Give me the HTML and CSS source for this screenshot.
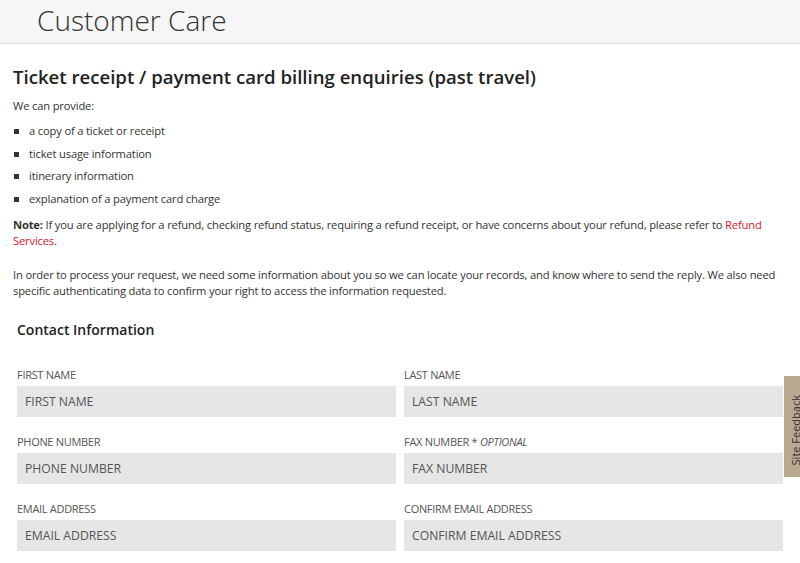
FILE: index.html
```html
<!DOCTYPE html>
<html lang="en">
<head>
    <meta charset="UTF-8">
    <title>Customer Care</title>
    <link rel="stylesheet" href="styles.css">
</head>
<body>
<div class="page-header">
    <div class="page-title">Customer Care</div>
</div>

<div class="content">
    <h1>Ticket receipt / payment card billing enquiries (past travel)</h1>
    <p>We can provide:</p>
    <ul class="provide-list">
        <li>a copy of a ticket or receipt</li>
        <li>ticket usage information</li>
        <li>itinerary information</li>
        <li>explanation of a payment card charge</li>
    </ul>
    <p class="note"><b>Note:</b> If you are applying for a refund, checking refund status, requiring a refund receipt, or have concerns about your refund, please refer to <a href="#">Refund Services</a>.</p>
    <p class="intro">In order to process your request, we need some information about you so we can locate your records, and know where to send the reply. We also need specific authenticating data to confirm your right to access the information requested.</p>

    <form class="contact-form">
        <h2>Contact Information</h2>
        <div class="form-grid">
            <div class="field">
                <label>FIRST NAME</label>
                <input type="text" placeholder="FIRST NAME">
            </div>
            <div class="field">
                <label>LAST NAME</label>
                <input type="text" placeholder="LAST NAME">
            </div>
            <div class="field">
                <label>PHONE NUMBER</label>
                <input type="text" placeholder="PHONE NUMBER">
            </div>
            <div class="field">
                <label>FAX NUMBER * <i>OPTIONAL</i></label>
                <input type="text" placeholder="FAX NUMBER">
            </div>
            <div class="field">
                <label>EMAIL ADDRESS</label>
                <input type="text" placeholder="EMAIL ADDRESS">
            </div>
            <div class="field">
                <label>CONFIRM EMAIL ADDRESS</label>
                <input type="text" placeholder="CONFIRM EMAIL ADDRESS">
            </div>
        </div>
    </form>
</div>

<div class="feedback-tab"><span>Site Feedback</span></div>
</body>
</html>
```

FILE: styles.css
```css
* {
    margin: 0;
    padding: 0;
    box-sizing: border-box;
}

body {
    font-family: "Open Sans", "Liberation Sans", sans-serif;
    font-size: 11.2px;
    color: #333;
    background-color: #fff;
    overflow: hidden;
}

.page-header {
    height: 44px;
    background-color: #f6f6f6;
    border-bottom: 1px solid #e2e2e2;
    padding-left: 37px;
}

.page-title {
    font-size: 28px;
    font-weight: 300;
    line-height: 40px;
    color: #333;
}

.content {
    padding: 20px 13px 0;
}

h1 {
    font-size: 18.6px;
    font-weight: 600;
    line-height: 26px;
    color: #222;
    margin-bottom: 8px;
}

p {
    line-height: 16px;
    letter-spacing: -0.17px;
}

.provide-list {
    list-style: none;
    margin: 6px 0 7px;
    letter-spacing: -0.17px;
}

.provide-list li {
    line-height: 16px;
    padding: 3.3px 0 3.3px 16px;
    position: relative;
}

.provide-list li:before {
    content: "";
    width: 5px;
    height: 5px;
    background-color: #333;
    position: absolute;
    left: 1px;
    top: 9px;
}

.note {
    margin-bottom: 18px;
}

.note b {
    font-weight: 700;
}

.note a {
    color: #d7182a;
    text-decoration: none;
}

.contact-form {
    padding: 0 4px;
}

h2 {
    font-size: 14px;
    font-weight: 600;
    color: #222;
    line-height: 20px;
    margin: 21px 0 27px;
}

.form-grid {
    display: grid;
    grid-template-columns: 1fr 1fr;
    column-gap: 8px;
    row-gap: 17px;
}

.field label {
    display: block;
    font-size: 11px;
    line-height: 15px;
    color: #555;
    letter-spacing: -0.3px;
    margin-bottom: 4px;
}

.field label i {
    font-style: italic;
}

.field input {
    display: block;
    width: 100%;
    height: 31px;
    border: 0;
    background-color: #e6e6e6;
    padding: 0 8px;
    font-family: "Open Sans", "Liberation Sans", sans-serif;
    font-size: 12.2px;
    color: #555;
    outline: none;
}

.field input::placeholder {
    color: #555;
    opacity: 1;
}

.feedback-tab {
    width: 16px;
    height: 101px;
    background-color: #b9a990;
    position: fixed;
    right: 0;
    top: 376px;
    overflow: hidden;
    display: flex;
    flex-direction: column;
    justify-content: flex-end;
    padding-bottom: 12px;
}

.feedback-tab span {
    display: block;
    writing-mode: vertical-rl;
    transform: rotate(180deg);
    font-size: 11px;
    line-height: 14px;
    color: #333;
    white-space: nowrap;
    margin-left: 5px;
}
```
